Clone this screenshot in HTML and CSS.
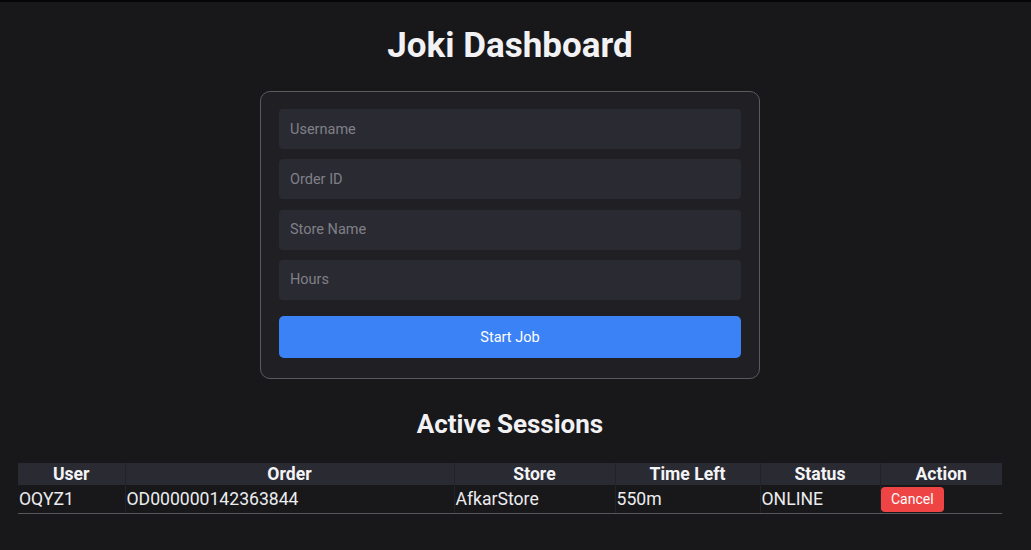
FILE: index.html
```html
<!DOCTYPE html>
<html lang="en">
<head>
<meta charset="utf-8">
<title>Joki Dashboard</title>
<link rel="stylesheet" href="styles.css">
</head>
<body>
<div class="page">
  <h1 class="title">Joki Dashboard</h1>
  <form class="card">
    <input class="field" type="text" placeholder="Username">
    <input class="field" type="text" placeholder="Order ID">
    <input class="field" type="text" placeholder="Store Name">
    <input class="field" type="text" placeholder="Hours">
    <button class="start" type="button">Start Job</button>
  </form>
  <h2 class="subtitle">Active Sessions</h2>
  <table class="sessions">
    <colgroup>
      <col class="c-user">
      <col class="c-order">
      <col class="c-store">
      <col class="c-time">
      <col class="c-status">
      <col class="c-action">
    </colgroup>
    <thead>
      <tr>
        <th>User</th>
        <th>Order</th>
        <th>Store</th>
        <th>Time Left</th>
        <th>Status</th>
        <th>Action</th>
      </tr>
    </thead>
    <tbody>
      <tr>
        <td>OQYZ1</td>
        <td>OD000000142363844</td>
        <td>AfkarStore</td>
        <td>550m</td>
        <td>ONLINE</td>
        <td class="act"><button class="cancel" type="button">Cancel</button></td>
      </tr>
    </tbody>
  </table>
</div>
</body>
</html>
```

FILE: styles.css
```css
html, body {
  margin: 0;
  padding: 0;
  background: #18181b;
}

body {
  font-family: Roboto, "Liberation Sans", Arial, sans-serif;
  color: #f1f1f3;
  border-top: 2px solid #050505;
  min-height: 548px;
}

.page {
  width: 1020px;
  box-sizing: border-box;
  padding: 0 18px;
  display: flex;
  flex-direction: column;
  align-items: center;
}

.title {
  font-size: 35px;
  font-weight: 700;
  margin: 22.5px 0 0;
  line-height: 41px;
  color: #f2f2f4;
}

.card {
  margin-top: 25.5px;
  width: 500px;
  box-sizing: border-box;
  padding: 17px 18px 19.5px;
  background: #1f1f24;
  border: 1px solid #5a5a60;
  border-radius: 10px;
  display: flex;
  flex-direction: column;
  gap: 10.33px;
}

.field {
  height: 40px;
  box-sizing: border-box;
  padding: 0 11px;
  background: #2a2a33;
  border: none;
  border-radius: 4px;
  font-family: Roboto, "Liberation Sans", Arial, sans-serif;
  font-size: 14.5px;
  color: #e5e5e5;
  outline: none;
}

.field::placeholder {
  color: #808087;
}

.start {
  margin-top: 5.67px;
  height: 42.5px;
  background: #3b82f6;
  color: #ffffff;
  border: none;
  border-radius: 5px;
  font-family: Roboto, "Liberation Sans", Arial, sans-serif;
  font-size: 14.5px;
}

.subtitle {
  font-size: 26px;
  font-weight: 700;
  line-height: 1.17;
  margin: 30px 0 0;
  color: #f2f2f4;
}

.sessions {
  margin-top: 23.5px;
  width: 984px;
  table-layout: fixed;
  border-collapse: collapse;
  font-size: 17.6px;
  line-height: 1.17;
}

.c-user { width: 107px; }
.c-order { width: 329px; }
.c-store { width: 161px; }
.c-time { width: 145px; }
.c-status { width: 120px; }
.c-action { width: 122px; }

.sessions th {
  background: #2a2a33;
  font-weight: 700;
  padding: 1px;
  text-align: center;
  color: #f4f4f6;
  border-left: 1px solid #222228;
}

.sessions td {
  padding: 1px;
  text-align: left;
  color: #ececee;
  border-left: 1px solid #222228;
  border-bottom: 1px solid #55555a;
  white-space: nowrap;
}

.sessions td.act {
  padding-left: 0;
  padding-top: 1.5px;
}

.sessions th:first-child,
.sessions td:first-child {
  border-left: none;
}

.cancel {
  background: #ef4444;
  color: #ffffff;
  border: none;
  border-radius: 4px;
  padding: 4px 10.5px;
  font-family: Roboto, "Liberation Sans", Arial, sans-serif;
  font-size: 14px;
  line-height: 17px;
  display: block;
}
```
